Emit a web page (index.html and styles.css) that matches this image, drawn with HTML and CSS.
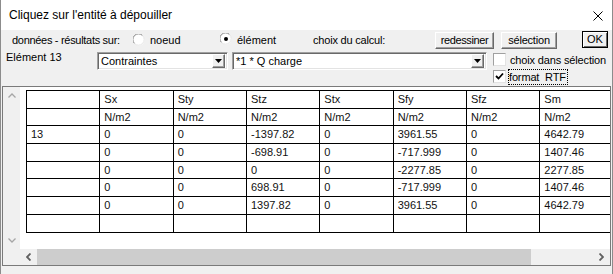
FILE: index.html
```html
<!DOCTYPE html>
<html>
<head>
<meta charset="utf-8">
<link rel="stylesheet" href="styles.css">
</head>
<body>
<div class="win">
  <div class="titlebar">
    <span class="title">Cliquez sur l'entité à dépouiller</span>
    <svg class="close" width="10" height="10" viewBox="0 0 10 10"><path d="M0.5 0.5 L9.5 9.5 M9.5 0.5 L0.5 9.5" stroke="#000" stroke-width="1" fill="none"/></svg>
  </div>
  <div class="row1">
    <span class="lbl lbl-donnees">données - résultats sur:</span>
    <label class="radio r-noeud">
      <svg width="12" height="12" viewBox="0 0 12 12"><circle cx="6" cy="6" r="5.5" fill="#fff"/><path d="M1.5 9.5 A5.5 5.5 0 0 1 9.5 1.5" stroke="#8a8a8a" fill="none"/><path d="M9.5 1.5 A5.5 5.5 0 0 1 1.5 9.5" stroke="#e6e6e6" fill="none"/></svg>
      <span>noeud</span>
    </label>
    <label class="radio r-elem">
      <svg width="12" height="12" viewBox="0 0 12 12"><circle cx="6" cy="6" r="5.5" fill="#fff"/><path d="M1.5 9.5 A5.5 5.5 0 0 1 9.5 1.5" stroke="#8a8a8a" fill="none"/><path d="M9.5 1.5 A5.5 5.5 0 0 1 1.5 9.5" stroke="#e6e6e6" fill="none"/><circle cx="6" cy="6" r="2" fill="#000"/></svg>
      <span>élément</span>
    </label>
    <span class="lbl lbl-choix">choix du calcul:</span>
    <button class="btn btn-redess">redessiner</button>
    <button class="btn btn-sel">sélection</button>
    <button class="btn btn-ok">OK</button>
  </div>
  <div class="row2">
    <span class="lbl-elem">Elément 13</span>
    <div class="combo c1"><span class="combo-text">Contraintes</span><span class="combo-arrow"><svg width="7" height="4" viewBox="0 0 7 4"><path d="M0 0 H7 L3.5 4 Z" fill="#000"/></svg></span></div>
    <div class="combo c2"><span class="combo-text">*1 * Q charge</span><span class="combo-arrow"><svg width="7" height="4" viewBox="0 0 7 4"><path d="M0 0 H7 L3.5 4 Z" fill="#000"/></svg></span></div>
    <div class="checks">
      <label class="chk"><span class="box"></span><span class="chk-text">choix dans sélection</span></label>
      <label class="chk"><span class="box"><svg width="9" height="9" viewBox="0 0 9 9"><path d="M1 4 L3.5 6.5 L8 1.5" stroke="#000" stroke-width="1.8" fill="none"/></svg></span><span class="chk-text focus">format&nbsp; RTF</span></label>
    </div>
  </div>
  <div class="frame">
    <div class="vscroll">
      <svg width="8" height="5" viewBox="0 0 8 5"><path d="M0.5 4.5 L4 1 L7.5 4.5" stroke="#a6a6a6" stroke-width="1.3" fill="none"/></svg>
      <svg width="8" height="5" viewBox="0 0 8 5"><path d="M0.5 0.5 L4 4 L7.5 0.5" stroke="#a6a6a6" stroke-width="1.3" fill="none"/></svg>
    </div>
    <div class="content">
      <div class="grid">
        <div class="c"></div><div class="c">Sx</div><div class="c">Sty</div><div class="c">Stz</div><div class="c">Stx</div><div class="c">Sfy</div><div class="c">Sfz</div><div class="c">Sm</div>
        <div class="c"></div><div class="c">N/m2</div><div class="c">N/m2</div><div class="c">N/m2</div><div class="c">N/m2</div><div class="c">N/m2</div><div class="c">N/m2</div><div class="c">N/m2</div>
        <div class="c">13</div><div class="c">0</div><div class="c">0</div><div class="c">-1397.82</div><div class="c">0</div><div class="c">3961.55</div><div class="c">0</div><div class="c">4642.79</div>
        <div class="c"></div><div class="c">0</div><div class="c">0</div><div class="c">-698.91</div><div class="c">0</div><div class="c">-717.999</div><div class="c">0</div><div class="c">1407.46</div>
        <div class="c"></div><div class="c">0</div><div class="c">0</div><div class="c">0</div><div class="c">0</div><div class="c">-2277.85</div><div class="c">0</div><div class="c">2277.85</div>
        <div class="c"></div><div class="c">0</div><div class="c">0</div><div class="c">698.91</div><div class="c">0</div><div class="c">-717.999</div><div class="c">0</div><div class="c">1407.46</div>
        <div class="c"></div><div class="c">0</div><div class="c">0</div><div class="c">1397.82</div><div class="c">0</div><div class="c">3961.55</div><div class="c">0</div><div class="c">4642.79</div>
        <div class="c"></div><div class="c"></div><div class="c"></div><div class="c"></div><div class="c"></div><div class="c"></div><div class="c"></div><div class="c"></div>
      </div>
    </div>
    <div class="corner"></div>
    <div class="hscroll">
      <span class="harrow"><svg width="5" height="8" viewBox="0 0 5 8"><path d="M4.5 0.5 L1 4 L4.5 7.5" stroke="#606060" stroke-width="1.8" fill="none"/></svg></span>
      <span class="thumb"></span>
      <span class="hspace"></span>
      <span class="harrow"><svg width="5" height="8" viewBox="0 0 5 8"><path d="M0.5 0.5 L4 4 L0.5 7.5" stroke="#606060" stroke-width="1.8" fill="none"/></svg></span>
    </div>
  </div>
</div>
</body>
</html>
```
FILE: styles.css
```css
html, body {
  margin: 0;
  padding: 0;
}
body {
  width: 613px;
  height: 274px;
  overflow: hidden;
  background: #f0f0f0;
  font-family: "Liberation Sans", Arial, sans-serif;
  color: #000;
}
.win {
  width: 613px;
  height: 274px;
  box-sizing: border-box;
  border-left: 1px solid #8c8c8c;
  border-right: 1px solid #8c8c8c;
  background: #f0f0f0;
  display: flex;
  flex-direction: column;
}
.titlebar {
  flex: none;
  height: 30px;
  background: #fff;
  display: flex;
  align-items: center;
  justify-content: space-between;
  padding: 0 9px 0 8px;
}
.title {
  font-size: 12px;
}
.close {
  display: block;
  margin-top: 1px;
}
.row1 {
  flex: none;
  height: 20px;
  display: flex;
  align-items: center;
  font-size: 11px;
}
.lbl, .radio {
  flex: none;
  white-space: nowrap;
}
.lbl-donnees {
  margin-left: 11px;
  width: 121px;
  letter-spacing: -0.3px;
}
.radio {
  display: flex;
  align-items: center;
  gap: 5px;
}
.radio svg {
  display: block;
  flex: none;
}
.r-noeud { width: 87px; }
.r-elem { width: 93px; }
.r-elem svg { margin-top: -2px; }
.lbl-choix {
  width: 122px;
  letter-spacing: -0.2px;
}
.btn {
  flex: none;
  height: 17px;
  box-sizing: border-box;
  padding: 0;
  margin: 0;
  font-family: "Liberation Sans", Arial, sans-serif;
  font-size: 11px;
  color: #000;
  background: #f0f0f0;
  border-top: 1px solid #fff;
  border-left: 1px solid #fff;
  border-right: 1px solid #696969;
  border-bottom: 1px solid #696969;
  box-shadow: inset -1px -1px 0 #a0a0a0;
  line-height: 14px;
}
.btn-redess { width: 59px; margin-right: 7px; letter-spacing: -0.4px; }
.btn-sel { width: 56px; margin-right: 25px; letter-spacing: -0.2px; }
.btn-ok {
  width: 26px;
  margin-bottom: 2px;
  border: 1px solid #000;
  box-shadow: inset 1px 1px 0 #fff, inset -1px -1px 0 #696969;
}
.row2 {
  flex: none;
  height: 36px;
  display: flex;
  align-items: flex-start;
  font-size: 11px;
}
.lbl-elem {
  flex: none;
  margin-left: 5px;
  margin-top: 1px;
  width: 91px;
  line-height: 13px;
}
.combo {
  flex: none;
  margin-top: 2px;
  height: 18px;
  box-sizing: border-box;
  background: #fff;
  border-top: 1px solid #a0a0a0;
  border-left: 1px solid #a0a0a0;
  border-right: 1px solid #fff;
  border-bottom: 1px solid #fff;
  box-shadow: inset 1px 1px 0 #696969, inset -1px -1px 0 #e3e3e3;
  display: flex;
  align-items: center;
  justify-content: space-between;
  padding: 0 2px 0 3px;
}
.c1 { width: 131px; margin-right: 4px; }
.c2 { width: 255px; margin-right: 6px; }
.combo-text {
  white-space: nowrap;
  font-size: 11px;
}
.combo-arrow {
  width: 13px;
  height: 14px;
  box-sizing: border-box;
  background: #f0f0f0;
  border-top: 1px solid #fff;
  border-left: 1px solid #fff;
  border-right: 1px solid #696969;
  border-bottom: 1px solid #696969;
  box-shadow: inset -1px -1px 0 #a0a0a0;
  display: flex;
  align-items: center;
  justify-content: center;
}
.combo-arrow svg { display: block; }
.checks {
  flex: none;
  margin-top: 3px;
  display: flex;
  flex-direction: column;
  gap: 4px;
}
.chk {
  display: flex;
  align-items: center;
  height: 13px;
  white-space: nowrap;
}
.box {
  flex: none;
  width: 13px;
  height: 13px;
  box-sizing: border-box;
  background: #fff;
  border-top: 1px solid #a0a0a0;
  border-left: 1px solid #a0a0a0;
  border-right: 1px solid #e3e3e3;
  border-bottom: 1px solid #e3e3e3;
  display: flex;
  align-items: center;
  justify-content: center;
}
.box svg { display: block; }
.chk-text {
  margin-left: 4px;
  letter-spacing: -0.15px;
}
.focus {
  margin-left: 3px;
  outline: 1px dotted #000;
  padding: 1px 1px 1px 0;
}
.frame {
  flex: none;
  margin-left: 1px;
  width: 609px;
  height: 180px;
  box-sizing: border-box;
  border: 1px solid #7a7a7a;
  display: grid;
  grid-template-columns: 17px 590px;
  grid-template-rows: 162px 16px;
}
.vscroll {
  background: #f0f0f0;
  display: flex;
  flex-direction: column;
  justify-content: space-between;
  align-items: center;
  padding: 6px 0 6px;
}
.vscroll svg { display: block; }
.content {
  background: #fff;
  overflow: hidden;
  padding: 3px 0 0 6px;
}
.grid {
  display: grid;
  grid-template-columns: repeat(8, 73.33px);
  grid-template-rows: repeat(8, 17.7px);
  border-top: 1px solid #000;
  border-left: 1px solid #000;
  width: 587px;
  font-size: 11px;
  color: #111;
}
.c {
  border-right: 1px solid #000;
  border-bottom: 1px solid #000;
  padding-left: 4px;
  line-height: 16px;
  white-space: nowrap;
  overflow: hidden;
}
.corner {
  background: #f0f0f0;
}
.hscroll {
  background: #f0f0f0;
  display: flex;
  align-items: stretch;
}
.harrow {
  flex: none;
  width: 17px;
  display: flex;
  align-items: center;
  justify-content: center;
}
.harrow svg { display: block; }
.thumb {
  flex: none;
  width: 494px;
  background: #cdcdcd;
}
.hspace {
  flex: 1;
}
```
